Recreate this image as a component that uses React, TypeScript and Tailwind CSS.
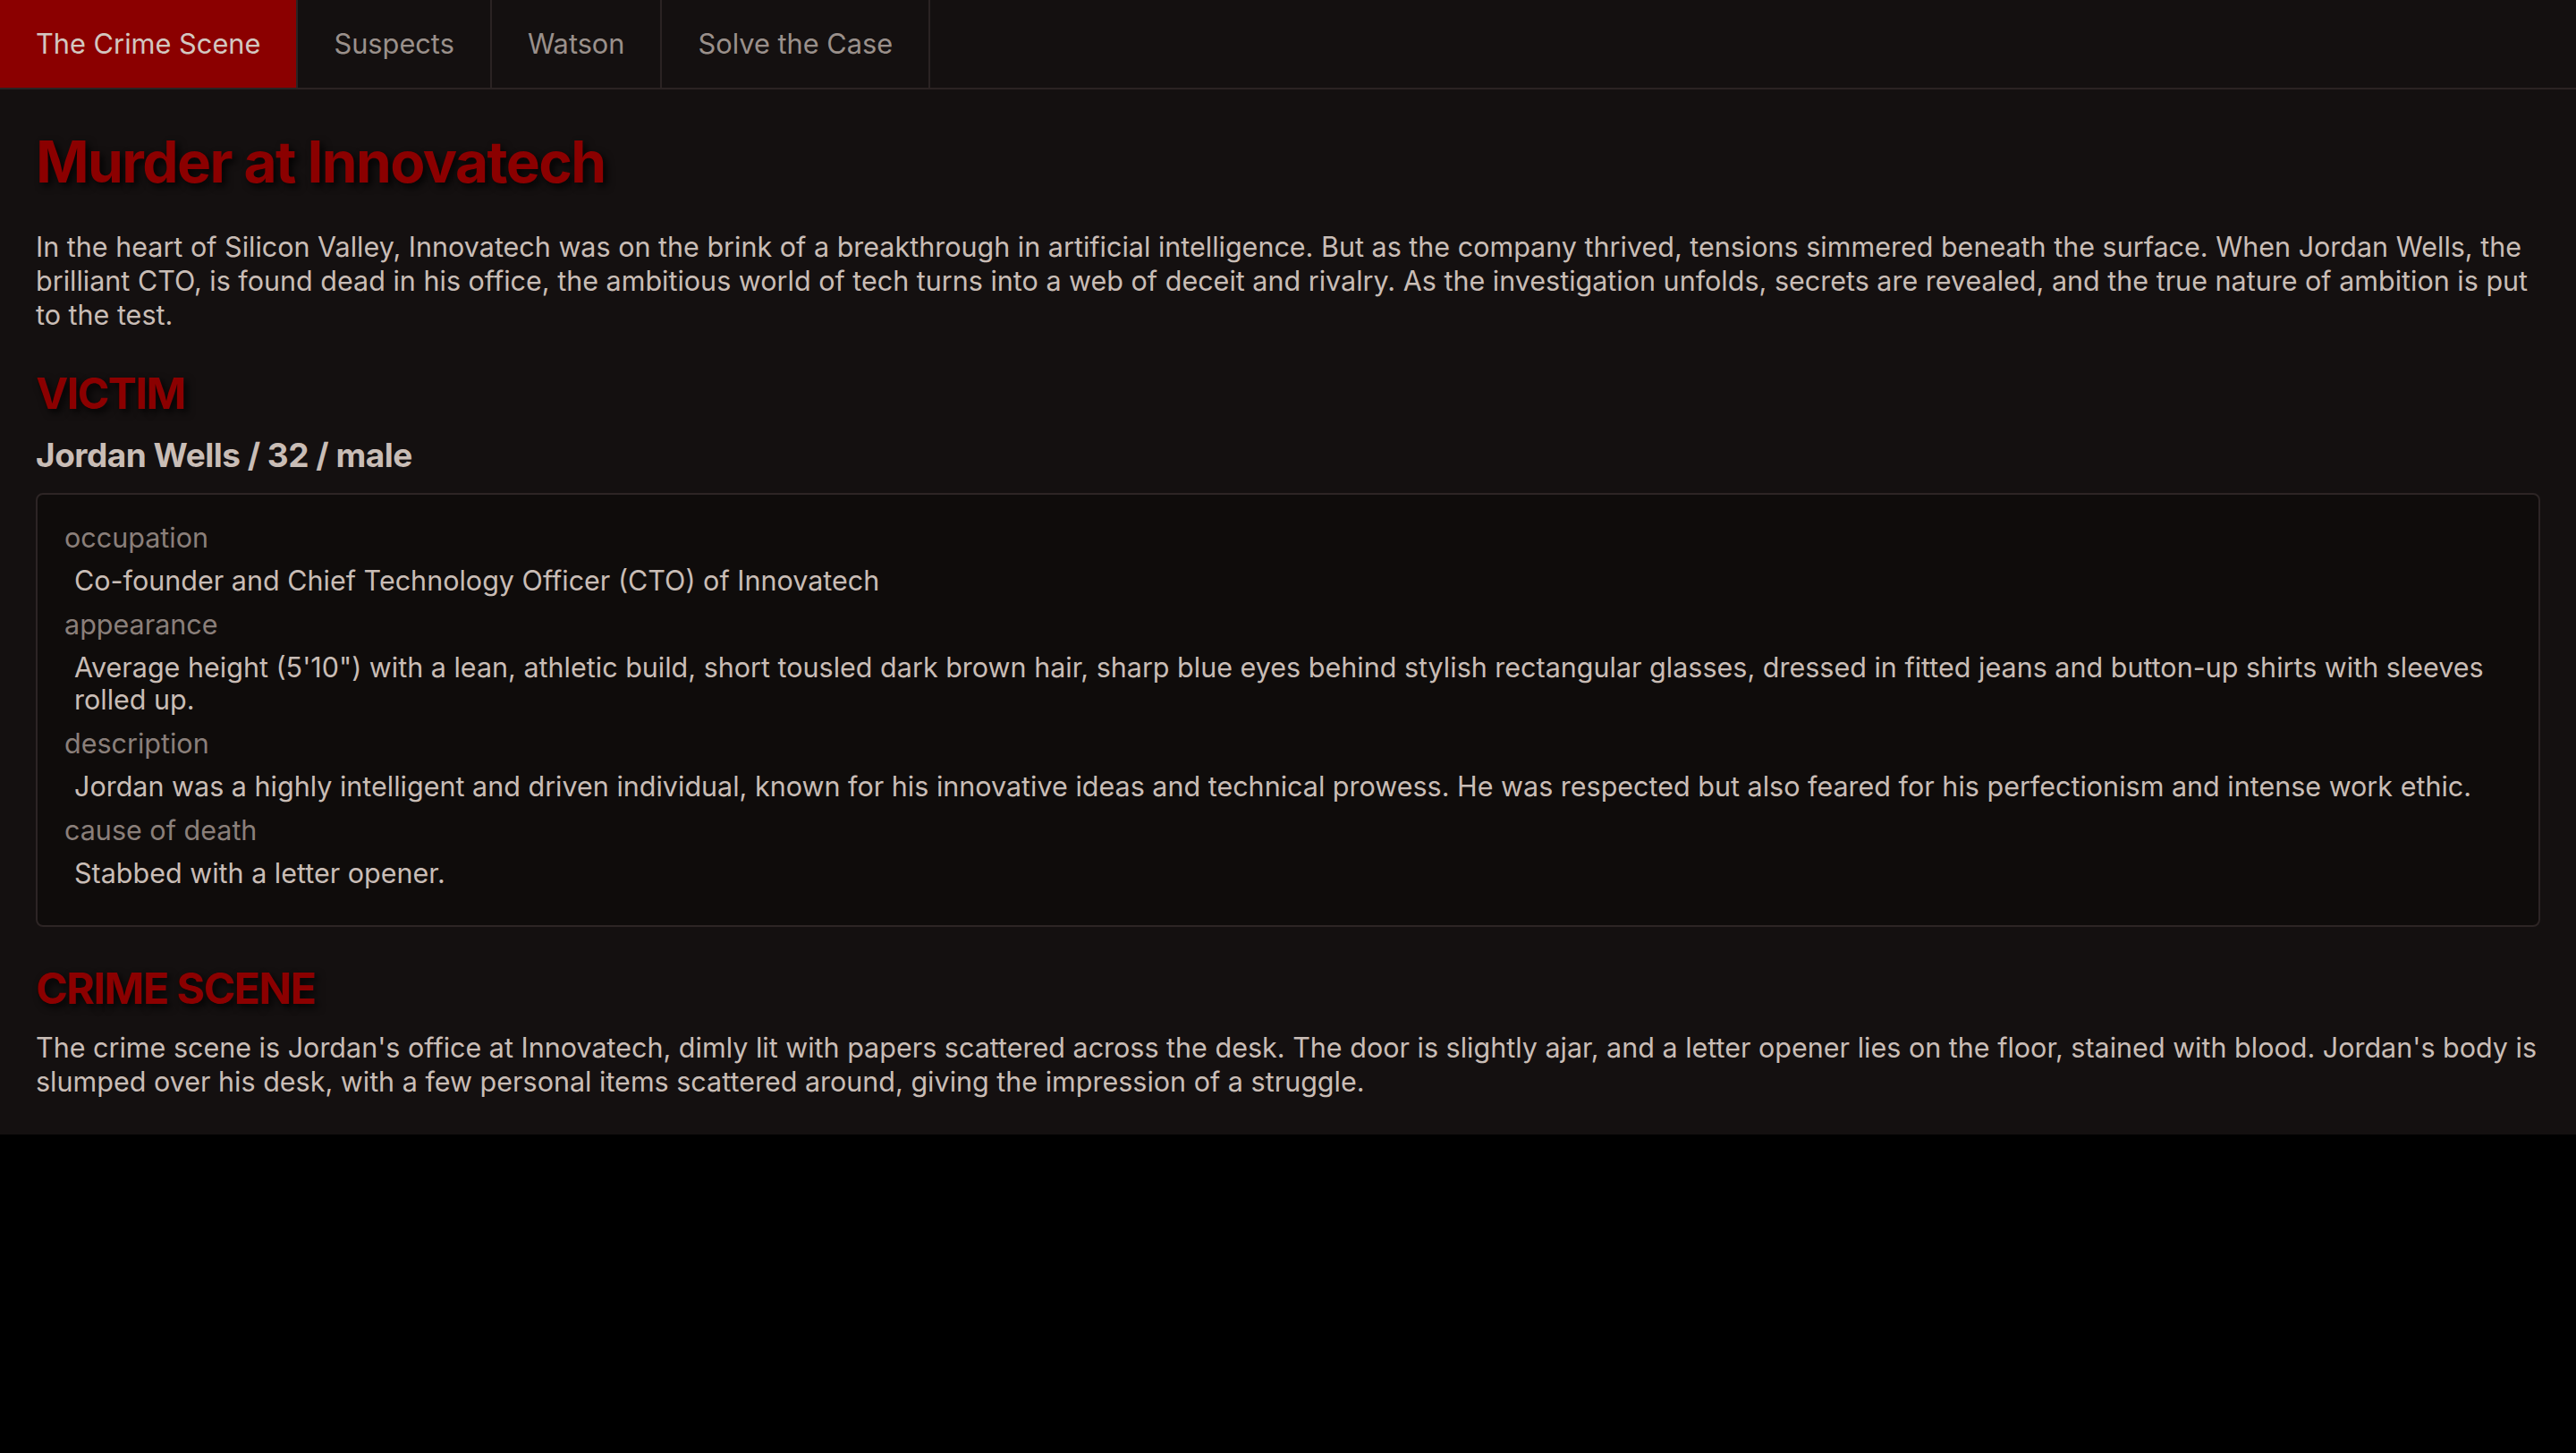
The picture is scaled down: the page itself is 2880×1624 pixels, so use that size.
import React from "react";

const tabs = ["The Crime Scene", "Suspects", "Watson", "Solve the Case"];

const victimDetails = [
  { label: "occupation", value: "Co-founder and Chief Technology Officer (CTO) of Innovatech" },
  {
    label: "appearance",
    value:
      "Average height (5'10\") with a lean, athletic build, short tousled dark brown hair, sharp blue eyes behind stylish rectangular glasses, dressed in fitted jeans and button-up shirts with sleeves rolled up.",
  },
  {
    label: "description",
    value:
      "Jordan was a highly intelligent and driven individual, known for his innovative ideas and technical prowess. He was respected but also feared for his perfectionism and intense work ethic.",
  },
  { label: "cause of death", value: "Stabbed with a letter opener." },
];

function TabBar() {
  return (
    <nav className="flex h-[100px] border-b-2 border-[#2b2323] text-[30.75px]">
      {tabs.map((tab, i) => (
        <div
          key={tab}
          className={
            i === 0
              ? "flex items-center px-10 border-r-2 border-[#2b2323] bg-[#8b0000] text-[#d3c7c0]"
              : "flex items-center px-10 border-r-2 border-[#2b2323] text-[#9a908b]"
          }
        >
          {tab}
        </div>
      ))}
    </nav>
  );
}

function SectionTitle({ children }: { children: React.ReactNode }) {
  return (
    <h2 className="text-[48px] leading-[58px] font-bold tracking-[-1.4px] text-[#8b0000] [text-shadow:4px_4px_8px_rgba(0,0,0,0.85)]">
      {children}
    </h2>
  );
}

export default function App() {
  return (
    <div className="min-h-screen bg-black font-['Inter','Noto_Sans',sans-serif] text-[30.5px] leading-[38px] text-[#c9bdb6]">
      <div className="bg-[#141010]">
        <TabBar />
        <main className="p-10">
          <h1 className="text-[64px] leading-[77px] font-bold tracking-[-1.6px] text-[#8b0000] mt-[2px] mb-[38px] [text-shadow:4px_4px_8px_rgba(0,0,0,0.85)]">
            Murder at Innovatech
          </h1>
          <p className="mb-10">
            In the heart of Silicon Valley, Innovatech was on the brink of a breakthrough in artificial
            intelligence. But as the company thrived, tensions simmered beneath the surface. When Jordan
            Wells, the brilliant CTO, is found dead in his office, the ambitious world of tech turns into a
            web of deceit and rivalry. As the investigation unfolds, secrets are revealed, and the true
            nature of ambition is put to the test.
          </p>

          <SectionTitle>VICTIM</SectionTitle>
          <h3 className="mt-[18px] text-[37px] leading-[44px] font-bold tracking-[-0.5px] text-[#c9bdb6]">
            Jordan Wells / 32 / male
          </h3>
          <dl className="mt-5 rounded-lg border-2 border-[#2d2525] bg-[#0f0c0b] px-[30px] pt-[30px] pb-[27px] leading-[36px]">
            {victimDetails.map((d) => (
              <div key={d.label}>
                <dt className="text-[#8a7f7a]">{d.label}</dt>
                <dd className="mt-3 mb-[13px] pl-[11px]">{d.value}</dd>
              </div>
            ))}
          </dl>

          <div className="mt-10">
            <SectionTitle>CRIME SCENE</SectionTitle>
            <p className="mt-[18px]">
              The crime scene is Jordan's office at Innovatech, dimly lit with papers scattered across the
              desk. The door is slightly ajar, and a letter opener lies on the floor, stained with blood.
              Jordan's body is slumped over his desk, with a few personal items scattered around, giving the
              impression of a struggle.
            </p>
          </div>
        </main>
      </div>
    </div>
  );
}
